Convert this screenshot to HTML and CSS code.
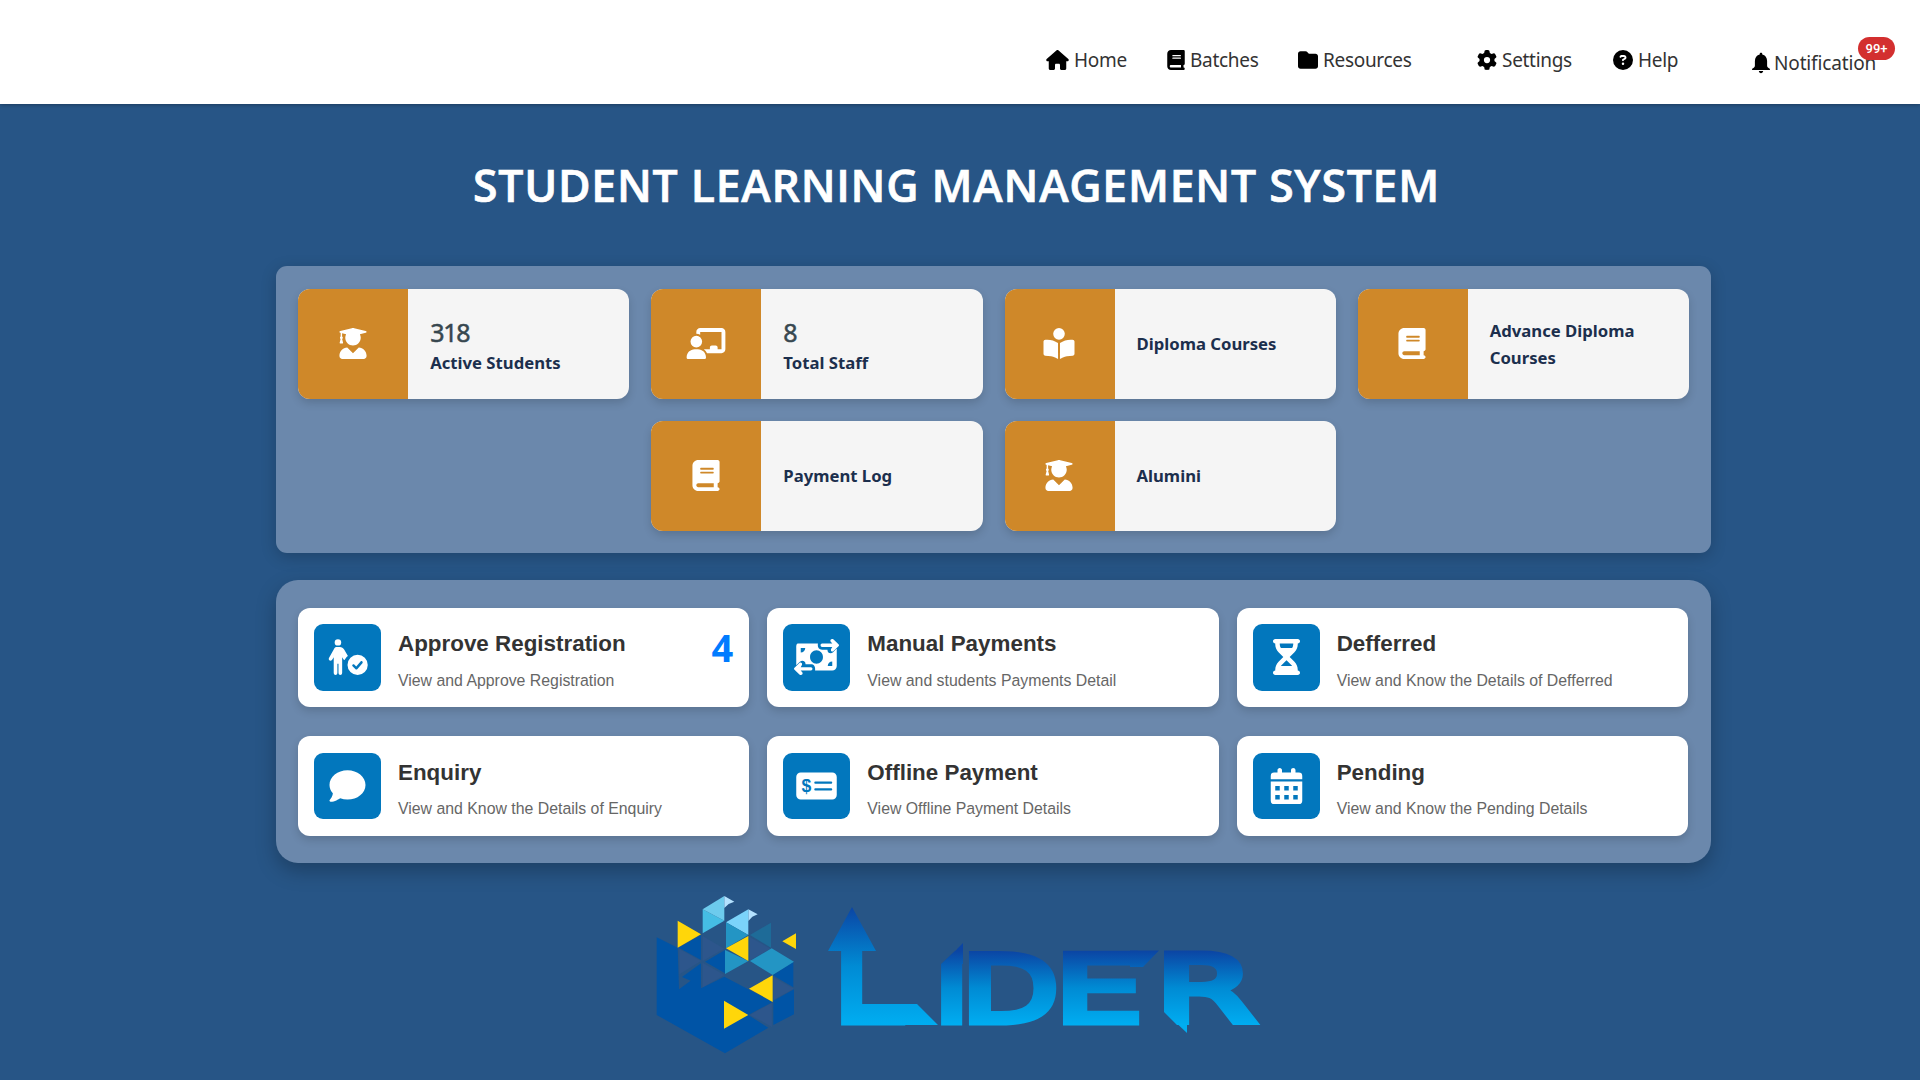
FILE: index.html
```html
<!DOCTYPE html>
<html lang="en">
<head>
<meta charset="utf-8">
<title>Student Learning Management System</title>
<link rel="stylesheet" href="styles.css">
</head>
<body>
<svg class="sprite" aria-hidden="true">
  <symbol id="house" viewBox="0 0 576 512"><path d="M575.8 255.5c0 18-15 32.1-32 32.1h-32l.7 160.2c0 2.7-.2 5.4-.5 8.1V472c0 22.1-17.9 40-40 40H392c-22.1 0-40-17.9-40-40V384c0-17.7-14.3-32-32-32H256c-17.7 0-32 14.3-32 32v88c0 22.1-17.9 40-40 40H104c-22.1 0-40-17.9-40-40V287.600H32c-18 0-32-14-32-32.100c0-9 3-17 10-24L266.400 8c7-7 15-8 22-8s15 2 21 7L564.800 231.500c8 7 12 15 11 24z"/></symbol>
  <symbol id="book" viewBox="0 0 448 512"><path d="M96 0C43 0 0 43 0 96V416c0 53 43 96 96 96H416c17.700 0 32-14.300 32-32s-14.300-32-32-32V384c17.700 0 32-14.300 32-32V32c0-17.700-14.300-32-32-32H96zm0 384H352v64H96c-17.700 0-32-14.300-32-32s14.300-32 32-32zm32-240c0-8.800 7.200-16 16-16H336c8.800 0 16 7.200 16 16s-7.200 16-16 16H144c-8.800 0-16-7.200-16-16zm16 48H336c8.800 0 16 7.200 16 16s-7.200 16-16 16H144c-8.800 0-16-7.200-16-16s7.200-16 16-16z"/></symbol>
  <symbol id="folder" viewBox="0 0 512 512"><path d="M64 480H448c35.300 0 64-28.700 64-64V160c0-35.300-28.700-64-64-64H288c-10.100 0-19.600-4.700-25.600-12.800L243.200 57.600C231.100 41.500 212.100 32 192 32H64C28.700 32 0 60.700 0 96V416c0 35.300 28.700 64 64 64z"/></symbol>
  <symbol id="gear" viewBox="0 0 512 512"><path d="M495.900 166.600c3.200 8.700 .5 18.400-6.400 24.600l-43.300 39.400c1.100 8.300 1.700 16.800 1.700 25.400s-.6 17.100-1.700 25.400l43.300 39.400c6.900 6.200 9.600 15.900 6.400 24.600c-4.400 11.900-9.700 23.300-15.800 34.300l-4.700 8.100c-6.600 11-14 21.400-22.100 31.200c-5.900 7.200-15.700 9.600-24.500 6.800l-55.700-17.700c-13.400 10.300-28.200 18.900-44 25.400l-12.500 57.100c-2 9.100-9 16.300-18.200 17.800c-13.800 2.300-28 3.500-42.500 3.500s-28.700-1.200-42.500-3.500c-9.200-1.500-16.200-8.700-18.200-17.800l-12.500-57.100c-15.800-6.500-30.600-15.100-44-25.400L83.100 425.900c-8.800 2.800-18.600 .3-24.500-6.800c-8.100-9.800-15.500-20.200-22.100-31.200l-4.700-8.100c-6.100-11-11.400-22.400-15.800-34.300c-3.200-8.700-.5-18.400 6.400-24.600l43.300-39.400C64.600 273.100 64 264.600 64 256s.6-17.100 1.700-25.400L22.400 191.200c-6.900-6.200-9.600-15.900-6.400-24.600c4.400-11.900 9.700-23.300 15.800-34.300l4.700-8.100c6.600-11 14-21.400 22.100-31.200c5.900-7.200 15.700-9.600 24.500-6.800l55.700 17.700c13.400-10.300 28.200-18.900 44-25.400l12.500-57.100c2-9.100 9-16.300 18.200-17.800C227.300 1.200 241.500 0 256 0s28.700 1.200 42.500 3.500c9.200 1.500 16.200 8.700 18.200 17.800l12.500 57.100c15.800 6.500 30.600 15.100 44 25.400l55.700-17.700c8.800-2.800 18.600-.3 24.500 6.800c8.100 9.800 15.500 20.200 22.100 31.200l4.700 8.100c6.100 11 11.400 22.400 15.800 34.300zM256 336a80 80 0 1 0 0-160 80 80 0 1 0 0 160z"/></symbol>
  <symbol id="question" viewBox="0 0 512 512"><path d="M256 512A256 256 0 1 0 256 0a256 256 0 1 0 0 512zM169.800 165.300c7.900-22.300 29.100-37.300 52.800-37.300h58.300c34.900 0 63.100 28.300 63.100 63.100c0 22.600-12.100 43.500-31.700 54.800L280 264.400c-.2 13-10.900 23.600-24 23.600c-13.300 0-24-10.700-24-24V250.500c0-8.600 4.600-16.500 12.100-20.800l44.300-25.400c4.700-2.700 7.600-7.700 7.600-13.100c0-8.400-6.800-15.100-15.100-15.100H222.600c-3.400 0-6.400 2.100-7.500 5.300l-.4 1.200c-4.400 12.500-18.200 19-30.600 14.600s-19-18.200-14.600-30.600l.4-1.200zM224 352a32 32 0 1 1 64 0 32 32 0 1 1 -64 0z"/></symbol>
  <symbol id="bell" viewBox="0 0 448 512"><path d="M224 0c-20 0-32 14-32 32v14C118 64 72 126 72 208v112c0 24-10 36-28 54L6 402c-10 10-6 28 10 28H432c16 0 20-18 10-28l-38-28c-18-18-28-30-28-54V208c0-82-46-144-120-162V32c0-18-12-32-32-32zM170 456c4 32 26 56 54 56s50-24 54-56z"/></symbol>
  <symbol id="graduate" viewBox="0 0 448 512"><path d="M319.400 320.600L224 416l-95.400-95.400C57.100 323.700 0 382.200 0 454.400v9.600c0 26.500 21.500 48 48 48h352c26.500 0 48-21.500 48-48v-9.600c0-72.200-57.100-130.700-128.600-133.800zM13.600 79.800l6.400 1.500v58.400c-7 4.200-12 11.500-12 20.300 0 8.400 4.600 15.400 11.100 19.700L3.500 242c-1.700 6.900 2.100 14 7.600 14h41.800c5.500 0 9.300-7.100 7.600-14l-15.600-62.300C51.400 175.400 56 168.400 56 160c0-8.800-5-16.100-12-20.300V87.100l66 15.900c-8.600 17.200-14 36.400-14 57 0 70.700 57.300 128 128 128s128-57.300 128-128c0-20.600-5.300-39.800-14-57l96.300-23.200c18.200-4.400 18.200-27.100 0-31.500l-190.400-46c-13-3.100-26.700-3.100-39.700 0L13.600 48.200c-18.100 4.400-18.100 27.200 0 31.600z"/></symbol>
  <symbol id="teacher" viewBox="0 0 640 512"><path d="M160 64c0-35.300 28.700-64 64-64H576c35.300 0 64 28.700 64 64V352c0 35.300-28.700 64-64 64H336.800c-11.800-25.500-29.900-47.500-52.400-64H384V320c0-17.700 14.300-32 32-32h64c17.700 0 32 14.300 32 32v32h64V64L224 64v49.100C205.200 102.200 183.300 96 160 96V64zm0 64a96 96 0 1 1 0 192 96 96 0 1 1 0-192zM133.300 352h53.300C260.300 352 320 411.700 320 485.300c0 14.700-11.900 26.700-26.700 26.700H26.700C11.900 512 0 500.100 0 485.300C0 411.700 59.700 352 133.300 352z"/></symbol>
  <symbol id="reader" viewBox="0 0 512 512"><path d="M160 96a96 96 0 1 1 192 0A96 96 0 1 1 160 96zm80 152V512l-48.400-24.200c-20.900-10.400-43.500-17-66.800-19.300l-96-9.600C12.500 457.200 0 443.500 0 427V224c0-17.700 14.300-32 32-32H62.300c63.600 0 125.600 19.600 177.700 56zm32 264V248c52.100-36.400 114.100-56 177.700-56H480c17.700 0 32 14.300 32 32V427c0 16.400-12.500 30.200-28.800 31.800l-96 9.600c-23.200 2.300-45.900 8.900-66.800 19.300L272 512z"/></symbol>
  <symbol id="approve" viewBox="0 0 576 512"><circle cx="152" cy="48" r="46"/><path d="M126 112h52c30 0 48 14 62 38l54 90c-22 16-34 34-44 56-8 4-14 2-18-4l-20-34V480c0 42-52 42-52 0V352h-16v128c0 42-52 42-52 0V258l-22 36c-20 30-62 8-44-26l66-118c10-24 20-38 34-38z"/><path d="M432 224a144 144 0 1 0 0 288 144 144 0 0 0 0-288zm68 121-74 84c-8 8-16 8-24 0l-42-42c-16-16 8-40 24-24l28 28 62-70c16-18 42 6 26 24z"/></symbol>
  <symbol id="transfer" viewBox="0 0 640 512"><path fill-rule="evenodd" d="M64 64H340c-8 60 20 88 60 88h76c-4 48 50 66 80 36l34-34c8-8 18-14 18-14V384c0 36-28 64-64 64H300c8-60-20-88-60-88h-76c4-48-50-66-80-36L32 374V128c0-36 0-64 32-64zM96 128v64c36 0 64-28 64-64zM544 384v-64c-36 0-64 28-64 64zM320 160c-52 0-92 42-92 96s40 96 92 96 92-42 92-96-40-96-92-96z"/><path d="M525 7c12-10 28-10 38 0l70 68c10 10 10 18 0 28l-70 68c-22 20-48-4-34-32l16-27H400c-30 0-30-48 0-48h145l-22-24c-8-10-8-24 2-33zM115 505c-12 10-28 10-38 0L7 437c-10-10-10-18 0-28l70-68c22-20 48 4 34 32l-16 27h145c30 0 30 48 0 48H95l22 24c8 10 8 24-2 33z"/></symbol>
  <symbol id="hourglass" viewBox="0 0 384 512"><path d="M32 0C14.300 0 0 14.300 0 32S14.300 64 32 64V75c0 42.400 16.900 83.100 46.900 113.100L146.700 256 78.900 323.900C48.900 353.900 32 394.600 32 437v11c-17.700 0-32 14.300-32 32s14.300 32 32 32H352c17.700 0 32-14.300 32-32s-14.300-32-32-32V437c0-42.400-16.900-83.100-46.900-113.100L237.300 256l67.900-67.900c30-30 46.900-70.700 46.900-113.100V64c17.700 0 32-14.300 32-32s-14.300-32-32-32H32zM96 75V64H288V75c0 19-5.600 37.400-16 53H112c-10.300-15.600-16-34-16-53zm16 309c3.500-5.300 7.600-10.300 12.100-14.900L192 301.300l67.900 67.900c4.600 4.600 8.600 9.600 12.100 14.900H112z"/></symbol>
  <symbol id="comment" viewBox="0 0 512 512"><path d="M512 240c0 114.900-114.600 208-256 208c-37.100 0-72.300-6.400-104.100-17.900c-11.900 8.700-31.300 20.600-54.300 30.600C73.600 471.100 44.700 480 16 480c-6.500 0-12.300-3.900-14.800-9.900c-2.500-6-1.100-12.800 3.400-17.400l.3-.3c.3-.3 .7-.7 1.300-1.400c1.100-1.200 2.800-3.100 4.900-5.700c4.100-5 9.600-12.400 15.200-21.600c10-16.600 19.500-38.400 21.400-62.900C17.700 326.800 0 285.100 0 240C0 125.100 114.600 32 256 32s256 93.100 256 208z"/></symbol>
  <symbol id="calendar" viewBox="0 0 448 512"><path fill-rule="evenodd" d="M128 0c18 0 32 14 32 32V64H288V32c0-42 64-42 64 0V64h48a48 48 0 0 1 48 48v48H0V112A48 48 0 0 1 48 64H96V32C96 14 110 0 128 0zM0 192H448V464a48 48 0 0 1-48 48H48a48 48 0 0 1-48-48zM64 256v64h64v-64zM192 256v64h64v-64zM320 256v64h64v-64zM64 384v64h64v-64zM192 384v64h64v-64zM320 384v64h64v-64z"/></symbol>
</svg>

<header class="topbar">
  <nav class="nav">
    <a class="nav-item home"><svg><use href="#house"/></svg><span>Home</span></a>
    <a class="nav-item batches"><svg><use href="#book"/></svg><span>Batches</span></a>
    <a class="nav-item resources"><svg><use href="#folder"/></svg><span>Resources</span></a>
    <a class="nav-item settings"><svg><use href="#gear"/></svg><span>Settings</span></a>
    <a class="nav-item help"><svg><use href="#question"/></svg><span>Help</span></a>
    <a class="nav-item notification"><svg><use href="#bell"/></svg><span>Notification</span><b class="badge">99+</b></a>
  </nav>
</header>

<main class="page">
  <h1 class="title">STUDENT LEARNING MANAGEMENT SYSTEM</h1>

  <section class="panel stats">
    <article class="stat"><div class="stat-icon"><svg><use href="#graduate"/></svg></div><div class="stat-body"><span class="count">318</span><span class="label">Active Students</span></div></article>
    <article class="stat"><div class="stat-icon"><svg><use href="#teacher"/></svg></div><div class="stat-body"><span class="count">8</span><span class="label">Total Staff</span></div></article>
    <article class="stat"><div class="stat-icon"><svg><use href="#reader"/></svg></div><div class="stat-body"><span class="label">Diploma Courses</span></div></article>
    <article class="stat"><div class="stat-icon"><svg><use href="#book"/></svg></div><div class="stat-body"><span class="label">Advance Diploma Courses</span></div></article>
    <article class="stat"><div class="stat-icon"><svg><use href="#book"/></svg></div><div class="stat-body"><span class="label">Payment Log</span></div></article>
    <article class="stat"><div class="stat-icon"><svg><use href="#graduate"/></svg></div><div class="stat-body"><span class="label">Alumini</span></div></article>
  </section>

  <section class="panel actions">
    <article class="action"><div class="action-icon"><svg><use href="#approve"/></svg></div><div class="action-body"><h2>Approve Registration</h2><p>View and Approve Registration</p></div><strong class="pending-count">4</strong></article>
    <article class="action"><div class="action-icon"><svg><use href="#transfer"/></svg></div><div class="action-body"><h2>Manual Payments</h2><p>View and students Payments Detail</p></div></article>
    <article class="action"><div class="action-icon"><svg><use href="#hourglass"/></svg></div><div class="action-body"><h2>Defferred</h2><p>View and Know the Details of Defferred</p></div></article>
    <article class="action"><div class="action-icon"><svg><use href="#comment"/></svg></div><div class="action-body"><h2>Enquiry</h2><p>View and Know the Details of Enquiry</p></div></article>
    <article class="action"><div class="action-icon"><svg viewBox="0 0 576 512"><path fill-rule="evenodd" d="M64 64H512a64 64 0 0 1 64 64V384a64 64 0 0 1-64 64H64a64 64 0 0 1-64-64V128a64 64 0 0 1 64-64zM272 192a16 16 0 0 0 0 32H496a16 16 0 0 0 0-32zM272 288a16 16 0 0 0 0 32H496a16 16 0 0 0 0-32z"/><text class="dollar" x="144" y="346">$</text></svg></div><div class="action-body"><h2>Offline Payment</h2><p>View Offline Payment Details</p></div></article>
    <article class="action"><div class="action-icon"><svg><use href="#calendar"/></svg></div><div class="action-body"><h2>Pending</h2><p>View and Know the Pending Details</p></div></article>
  </section>

  <footer class="brand">
    <svg class="cube" viewBox="45 45 426 478">
      <g fill="#2d568c"><path d="M118 207l65 36-65 40zM188 168l65 38-65 37zM188 248l65 37-65 38zM330 172l62 34-62 35zM400 292l62 34-62 34zM330 405l66-37v73z"/></g>
      <path fill="#0054a6" d="M50 172l63 31 4 125 35-26-26-11 57-41v75l70-35 145 76-73 39 60 38-130 77L50 405zM116 203l67-38v75zM195 245l60-35v70zM398 286l62-41v77zM400 362l62-34v75l-62 32z"/>
      <path fill="#45bde4" d="M188 88v72l65-38z"/><path fill="#6dcbed" d="M188 88l65-40v74z"/>
      <path fill="#b4e2ff" d="M253 48l30 17-17 7-13 12zM325 88l28 15-16 7-12 13z"/>
      <path fill="#7bd3fa" d="M258 127l67-39v77z"/>
      <path fill="#2395c4" d="M258 127l67 38-67 40zM255 210l70 33-70 39zM330 243l65-38 67 40-64 40z"/>
      <path fill="#1e6b98" d="M393 128v75l-63-38z"/>
      <path fill="#ffd60a" d="M113 122l70 41-70 40zM325 168v75l-67-38zM468 160v47l-41-23zM398 286v80l-71-40zM252 362l73 43-73 41z"/>
    </svg>
    <svg class="wordmark" viewBox="826 905 440 130">
      <defs>
        <linearGradient id="blue" gradientUnits="userSpaceOnUse" x1="0" y1="951" x2="0" y2="1025"><stop offset="0" stop-color="#0b45a4"/><stop offset=".5" stop-color="#008bd4"/><stop offset="1" stop-color="#00adf1"/></linearGradient>
        <linearGradient id="arrow" gradientUnits="userSpaceOnUse" x1="0" y1="907" x2="0" y2="1025"><stop offset="0" stop-color="#0b45a4"/><stop offset=".5" stop-color="#008bd4"/><stop offset="1" stop-color="#00adf1"/></linearGradient>
      </defs>
      <text class="letters" y="1021.500"><tspan class="tall" x="833.700" textLength="67.600" lengthAdjust="spacingAndGlyphs">L</tspan><tspan x="933.700" textLength="35.800" lengthAdjust="spacingAndGlyphs">I</tspan><tspan x="961.300" textLength="97.700" lengthAdjust="spacingAndGlyphs">D</tspan><tspan x="1054.500" textLength="88.400" lengthAdjust="spacingAndGlyphs">E</tspan><tspan x="1155.300" textLength="100.500" lengthAdjust="spacingAndGlyphs">R</tspan></text>
      <path fill="url(#arrow)" d="M852 907l24 44h-48zM860 1004h57l21 21h-78z"/>
      <path fill="url(#blue)" d="M942 964l21-21v21zM1130 950.500h29l-16 16.500h-13z"/>
      <path fill="#00adf1" d="M1178 1024.500h9v8.500z"/>
      <path fill="#275586" d="M940 949h17l-17 16zM1163 1011l15 15h-15z"/>
    </svg>
  </footer>
</main>
</body>
</html>
```
FILE: styles.css
```css
* { box-sizing: border-box; }
body {
  margin: 0;
  height: 1080px;
  overflow: hidden;
  background: #275586;
  font-family: "Noto Sans", "Open Sans", sans-serif;
}
svg { display: block; fill: currentColor; }
.sprite { position: absolute; width: 0; height: 0; }

.topbar {
  height: 104px;
  background: #fff;
  box-shadow: 0 1px 4px rgba(0, 0, 0, .3);
  padding-left: 1046px;
}
.nav { display: flex; align-items: center; height: 104px; padding-top: 16px; }
.nav-item {
  display: flex;
  align-items: center;
  gap: 5px;
  flex: none;
  font-size: 19px;
  letter-spacing: -.3px;
  color: #333;
}
.nav-item svg { height: 20px; color: #000; }
.home { width: 121px; }
.home svg { width: 23px; }
.batches { width: 131px; }
.batches svg { width: 18px; }
.resources { width: 179px; }
.resources svg { width: 20px; }
.settings { width: 136px; }
.settings svg { width: 20px; }
.help { width: 139px; }
.help svg { width: 20px; }
.notification { position: relative; gap: 4px; padding-top: 6px; letter-spacing: -.15px; }
.notification svg { width: 18px; height: 22px; }
.badge {
  position: absolute;
  left: 106px;
  top: -7px;
  width: 37px;
  height: 23px;
  border-radius: 12px;
  background: #d32f2f;
  color: #fff;
  font: 500 13px/23px Roboto, sans-serif;
  letter-spacing: 0;
  text-align: center;
}

.page { width: 1435px; margin-left: 276px; }
.title {
  margin: 0 0 0 197px;
  padding-top: 50px;
  height: 162px;
  font: 600 44.500px/62px "Open Sans", "Noto Sans", sans-serif;
  letter-spacing: .76px;
  -webkit-text-stroke: .7px #fff;
  white-space: nowrap;
  color: #fff;
}
.panel { background: #6b88ac; }

.stats {
  display: flex;
  flex-wrap: wrap;
  justify-content: center;
  gap: 22px;
  padding: 22.500px 22px 22px;
  height: 287px;
  border-radius: 11px;
  box-shadow: 0 4px 16px rgba(0, 0, 0, .2);
}
.stat {
  display: flex;
  width: 331.200px;
  height: 110.200px;
  border-radius: 12px;
  overflow: hidden;
  background: #f5f5f5;
  box-shadow: 0 4px 9px rgba(0, 0, 0, .15);
}
.stat-icon {
  display: grid;
  place-items: center;
  width: 110px;
  flex: none;
  padding-right: 1px;
  background: #cf8829;
  color: #fff;
}
.stat-icon svg { width: 40px; height: 31px; }
.stat-body { display: flex; flex-direction: column; justify-content: center; padding: 0 20px 0 22px; }
.count { font-size: 25px; line-height: 34px; letter-spacing: -1.200px; -webkit-text-stroke: .5px #37474f; color: #37474f; margin-top: 4px; }
.label { font-size: 16.700px; line-height: 27px; font-weight: 700; color: #1c2f4d; }

.actions {
  display: grid;
  grid-template-columns: repeat(3, 1fr);
  grid-auto-rows: 99.500px;
  gap: 29px 18px;
  margin-top: 27px;
  padding: 27.500px 23px 27px 22px;
  border-radius: 22px;
  box-shadow: 0 8px 20px rgba(0, 0, 0, .25);
  font-family: "Liberation Sans", Arial, sans-serif;
}
.action {
  display: flex;
  padding: 16.500px 16px;
  border-radius: 12px;
  background: #fff;
  box-shadow: 0 4px 9px rgba(0, 0, 0, .15);
}
.action-icon {
  display: grid;
  place-items: center;
  width: 67px;
  height: 66.500px;
  border-radius: 9px;
  background: #0277bd;
  color: #fff;
}
.action-icon svg { width: 45px; height: 36px; }
.action-body { flex: 1; padding-left: 17px; }
.action h2 { margin: 6px 0 0; font-size: 22.400px; line-height: 28px; color: #333; }
.action p { margin: 9.500px 0 0; font-size: 15.850px; line-height: 26px; color: #666; }
.pending-count { font: 700 38px/46px "Open Sans", sans-serif; color: #007bff; }
.dollar { font: 700 250px "Liberation Sans", sans-serif; text-anchor: middle; fill: #0277bd; }

.brand { display: flex; align-items: flex-start; padding: 32px 0 0 379px; }
.cube { width: 142px; height: 159.300px; }
.wordmark { width: 440px; height: 130px; margin: 10px 0 0 29px; overflow: visible; }
.letters {
  font: 93.300px "DejaVu Sans", sans-serif;
  fill: url(#blue);
  stroke: url(#blue);
  stroke-width: 7px;
}
.tall { fill: url(#arrow); stroke: url(#arrow); }
```
